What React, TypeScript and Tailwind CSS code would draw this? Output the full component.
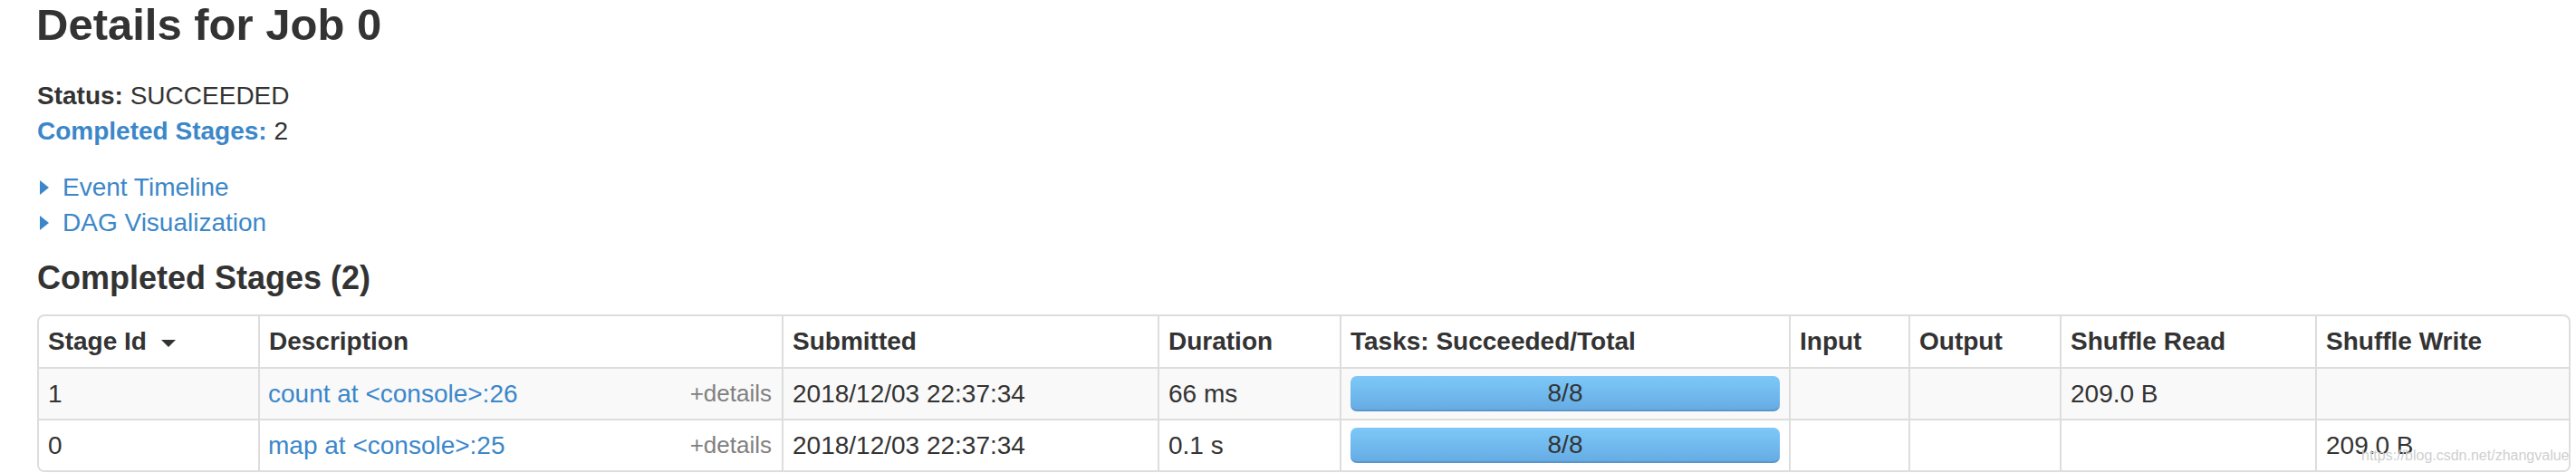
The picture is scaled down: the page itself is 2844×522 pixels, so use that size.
import React from 'react';

const COLS = 'grid grid-cols-[242px_578px_415px_201px_496px_132px_167px_282px_280px]';

const HEADERS = ['Description', 'Submitted', 'Duration', 'Tasks: Succeeded/Total', 'Input', 'Output', 'Shuffle Read', 'Shuffle Write'];

const STAGES = [
  { id: '1', desc: 'count at <console>:26', submitted: '2018/12/03 22:37:34', duration: '66 ms', tasks: '8/8', read: '209.0 B', write: '' },
  { id: '0', desc: 'map at <console>:25', submitted: '2018/12/03 22:37:34', duration: '0.1 s', tasks: '8/8', read: '', write: '209.0 B' },
];

function Arrow() {
  return <span className="ml-[3px] inline-block h-0 w-0 border-y-[8.5px] border-l-[10px] border-y-transparent border-l-[#3b87c9]" />;
}

export default function App() {
  return (
    <div className="relative h-[522px] overflow-hidden bg-white pl-[41px] font-['Liberation_Sans',Arial,sans-serif] text-[#333]">
      <h3 className="-ml-[1px] pt-[3px] text-[49px] font-bold leading-[48px]">Details for Job 0</h3>

      <ul className="mt-[35px] text-[28px] leading-[39px]">
        <li>
          <strong>Status:</strong> SUCCEEDED
        </li>
        <li>
          <a href="#" className="font-bold text-[#3b87c9]">Completed Stages:</a> 2
        </li>
      </ul>

      {/* collapsible sections */}
      <div className="mt-[23px] text-[28px] leading-[39px] text-[#3b87c9]">
        <div className="flex items-center">
          <Arrow />
          <a href="#" className="ml-[15px]">Event Timeline</a>
        </div>
        <div className="flex items-center">
          <Arrow />
          <a href="#" className="ml-[15px]">DAG Visualization</a>
        </div>
      </div>

      <h4 className="mt-[26px] text-[36px] font-bold leading-[32px]">Completed Stages (2)</h4>

      <div className="mt-[24px] w-[2797px] overflow-hidden rounded-[8px] border-2 border-[#ddd] text-[28px]">
        <div className={`${COLS} h-[56px] font-bold`}>
          <div className="flex items-center px-[10px]">
            Stage Id
            <svg className="ml-[16px] mt-[3px]" width="16" height="8" viewBox="0 0 16 8">
              <polygon points="0,0 16,0 8,8" fill="#333" />
            </svg>
          </div>
          {HEADERS.map((h) => (
            <div key={h} className="flex items-center border-l-2 border-[#ddd] px-[10px]">
              {h}
            </div>
          ))}
        </div>

        {STAGES.map((s, i) => (
          <div key={s.id} className={`${COLS} h-[57px] border-t-2 border-[#ddd] ${i === 0 ? 'bg-[#f9f9f9]' : 'bg-white'}`}>
            <div className="flex items-center px-[10px]">{s.id}</div>
            <div className="flex items-center justify-between border-l-2 border-[#ddd] pl-[9px] pr-[11px]">
              <a href="#" className="text-[#3b87c9]">{s.desc}</a>
              <span className="text-[26px] text-[#808080]">+details</span>
            </div>
            <div className="flex items-center border-l-2 border-[#ddd] px-[10px]">{s.submitted}</div>
            <div className="flex items-center border-l-2 border-[#ddd] px-[10px]">{s.duration}</div>
            <div className="flex items-center border-l-2 border-[#ddd] px-[10px]">
              <div className="flex h-[39px] w-full items-center justify-center rounded-[7px] border-b-2 border-[#5b95cb] bg-gradient-to-b from-[#7dc8f8] to-[#66ace4]">
                {s.tasks}
              </div>
            </div>
            <div className="border-l-2 border-[#ddd]" />
            <div className="border-l-2 border-[#ddd]" />
            <div className="flex items-center border-l-2 border-[#ddd] px-[10px]">{s.read}</div>
            <div className="flex items-center border-l-2 border-[#ddd] px-[10px]">{s.write}</div>
          </div>
        ))}
      </div>

      <span className="absolute left-[2607px] top-[493px] text-[16px] leading-[20px] text-[#cfcfcf]">
        https://blog.csdn.net/zhangvalue
      </span>
    </div>
  );
}
